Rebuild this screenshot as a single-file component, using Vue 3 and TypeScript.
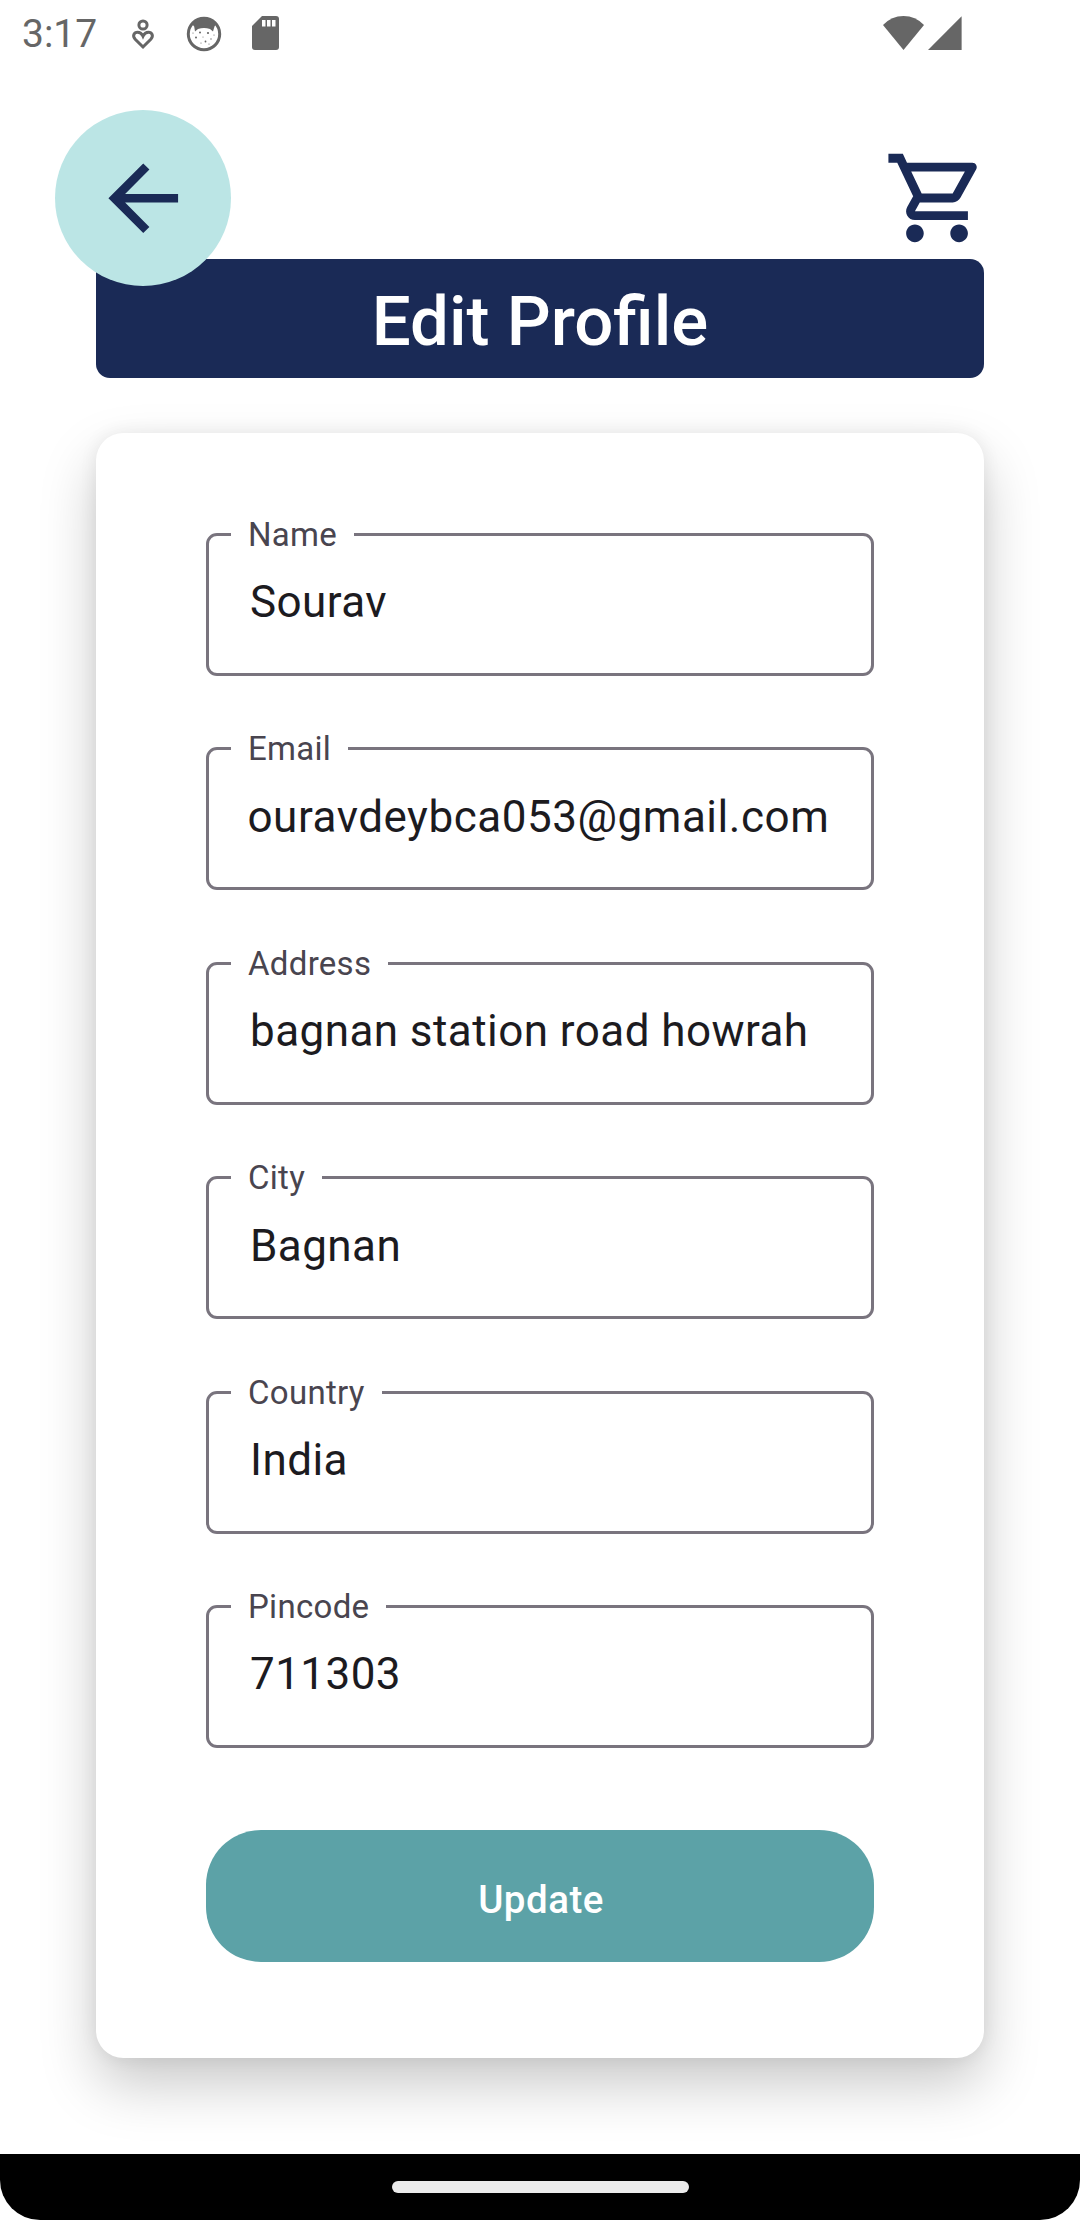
<script setup lang="ts">
import { ref } from 'vue'

interface Field {
  id: string
  label: string
  value: string
  scrolled?: boolean
}

const fields = ref<Field[]>([
  { id: 'name', label: 'Name', value: 'Sourav' },
  { id: 'email', label: 'Email', value: 'ouravdeybca053@gmail.com', scrolled: true },
  { id: 'address', label: 'Address', value: 'bagnan station road howrah' },
  { id: 'city', label: 'City', value: 'Bagnan' },
  { id: 'country', label: 'Country', value: 'India' },
  { id: 'pincode', label: 'Pincode', value: '711303' },
])
</script>

<template>
  <div class="screen">
    <header class="status">
      <span class="time">3:17</span>
      <svg class="s-heart" width="24" height="34" viewBox="0 0 24 34" fill="none" stroke="#666" stroke-width="3">
        <circle cx="12" cy="8" r="4.1" />
        <path d="M12 30 4.2 22.2C1 18.6 3.2 15.2 6.6 15.2c2.4 0 4.3 1.6 5.4 4 1.100-2.400 3-4 5.400-4 3.400 0 5.600 3.400 2.400 7z" />
      </svg>
      <svg class="s-cat" width="36" height="36" viewBox="0 0 36 36">
        <circle cx="18" cy="18" r="15.700" fill="none" stroke="#666" stroke-width="3" />
        <path d="M6 8Q18-2 30 8L28.500 10.500 27 15.500 24 13Q18 11 12 13L9 15.500 8.200 10.500Z" fill="#666" />
        <g fill="#666">
          <circle cx="14" cy="16.500" r="1" /><circle cx="22" cy="17" r="1.100" />
          <circle cx="10" cy="21.500" r="1" /><circle cx="19.500" cy="25.500" r=".9" />
          <circle cx="25" cy="23" r=".7" /><circle cx="15" cy="27" r=".6" />
          <circle cx="7" cy="17" r=".6" /><circle cx="17" cy="21" r=".5" />
          <circle cx="28" cy="19" r=".6" /><circle cx="23" cy="28" r=".6" />
        </g>
      </svg>
      <svg class="s-sd" width="27" height="34" viewBox="0 0 27 34">
        <path d="M10 0H24Q27 0 27 3V31Q27 34 24 34H3Q0 34 0 31V10Z" fill="#666" />
        <path d="M10 4h3.500v6.500H10zM15 4h3.500v6.500H15zM20 4h3.500v6.500H20z" fill="#fff" />
      </svg>
      <svg class="s-signal" width="79" height="34" viewBox="0 0 79 34" fill="#666">
        <path d="M0 9Q8.500 0 20.500 0T41 9L20.500 34Z" />
        <path d="M45 34H78.600V.2Z" />
      </svg>
    </header>

    <div class="toolbar">
      <button class="back" aria-label="Back">
        <svg width="104.500" height="104.500" viewBox="0 0 24 24" fill="#1a2a56">
          <path d="M20 11H7.830l5.590-5.590L12 4l-8 8 8 8 1.410-1.410L7.830 13H20z" />
        </svg>
      </button>
      <svg class="cart" width="106" height="106" viewBox="0 0 24 24" fill="#1a2a56">
        <path d="M15.550 13c.75 0 1.410-.41 1.750-1.030l3.580-6.490c.37-.66-.11-1.480-.87-1.480H5.210l-.94-2H1v2h2l3.600 7.590-1.350 2.440C4.520 15.370 5.480 17 7 17h12v-2H7l1.100-2h7.450zM6.160 6h12.150l-2.760 5H8.530L6.160 6zM7 18c-1.100 0-1.990.9-1.990 2S5.900 22 7 22s2-.9 2-2-.9-2-2-2zm10 0c-1.100 0-1.990.9-1.990 2s.89 2 1.990 2 2-.9 2-2-.9-2-2-2z" />
      </svg>
    </div>

    <h1 class="banner">Edit Profile</h1>

    <main class="card">
      <div class="fields">
        <div v-for="f in fields" :key="f.id" class="field">
          <span class="label">{{ f.label }}</span>
          <span class="value" :class="{ scrolled: f.scrolled }">{{ f.value }}</span>
        </div>
      </div>
      <button class="update">Update</button>
    </main>

    <footer class="nav"><span class="pill"></span></footer>
  </div>
</template>

<style>
body {
  background: #fff;
}
</style>

<style scoped>
.screen {
  width: 1080px;
  height: 2220px;
  display: flex;
  flex-direction: column;
  overflow: hidden;
  background: #fff;
  font-family: Roboto, sans-serif;
}
.status {
  height: 66px;
  flex: none;
  display: flex;
  align-items: center;
  box-sizing: border-box;
  padding: 0 118px 0 22px;
}
.time {
  width: 109px;
  padding-top: 2px;
  font-size: 39px;
  line-height: 46px;
  color: #666;
}
.s-heart {
  margin-top: 1px;
}
.s-cat {
  margin: 1px 0 0 31px;
}
.s-sd {
  margin-left: 30px;
}
.s-signal {
  margin-left: auto;
  margin-bottom: 1px;
}
.toolbar {
  height: 193px;
  flex: none;
  display: flex;
  justify-content: space-between;
  box-sizing: border-box;
  padding: 44px 90px 0 55px;
}
.back {
  position: relative;
  z-index: 1;
  width: 176px;
  height: 176px;
  flex: none;
  display: flex;
  align-items: center;
  justify-content: center;
  border: 0;
  padding: 0;
  border-radius: 50%;
  background: #bbe5e5;
}
.cart {
  margin-top: 35px;
}
.banner {
  height: 119px;
  flex: none;
  margin: 0 96px 55px;
  border-radius: 14px;
  background: #1a2a56;
  color: #fff;
  font-size: 69px;
  font-weight: 500;
  line-height: 126px;
  text-align: center;
}
.card {
  height: 1625px;
  flex: none;
  box-sizing: border-box;
  margin: 0 96px;
  padding: 100px 110px 0;
  border-radius: 27.5px;
  background: #fff;
  box-shadow: 0 27px 56px rgba(0, 0, 0, 0.21), 0 0 18px rgba(0, 0, 0, 0.07);
}
.fields {
  display: flex;
  flex-direction: column;
  gap: 71.42px;
}
.field {
  position: relative;
  height: 143px;
  box-sizing: border-box;
  border: 3px solid #79747e;
  border-radius: 11px;
  padding: 40.45px 0 0 41px;
}
.label {
  position: absolute;
  left: 22px;
  top: -21px;
  padding: 0 17px;
  background: #fff;
  color: #49454f;
  font-size: 33px;
  line-height: 39px;
  letter-spacing: 0.3px;
}
.value {
  display: block;
  font-size: 44px;
  line-height: 52px;
  letter-spacing: 0.44px;
  white-space: nowrap;
  color: #1c1b1f;
}
.scrolled {
  margin-left: -2.5px;
  letter-spacing: 0.53px;
}
.update {
  display: block;
  width: 100%;
  height: 132px;
  margin-top: 82px;
  padding: 6px 0 0 2px;
  border: 0;
  border-radius: 55px;
  background: #5ca2a7;
  color: #fff;
  font-family: inherit;
  font-size: 38.5px;
  font-weight: 500;
  letter-spacing: 0.5px;
}
.nav {
  height: 66px;
  flex: none;
  display: flex;
  justify-content: center;
  margin-top: 96px;
  border-radius: 0 0 40px 40px;
  background: #000;
}
.pill {
  width: 297px;
  height: 12px;
  margin-top: 27px;
  border-radius: 6px;
  background: #ebebeb;
}
</style>
